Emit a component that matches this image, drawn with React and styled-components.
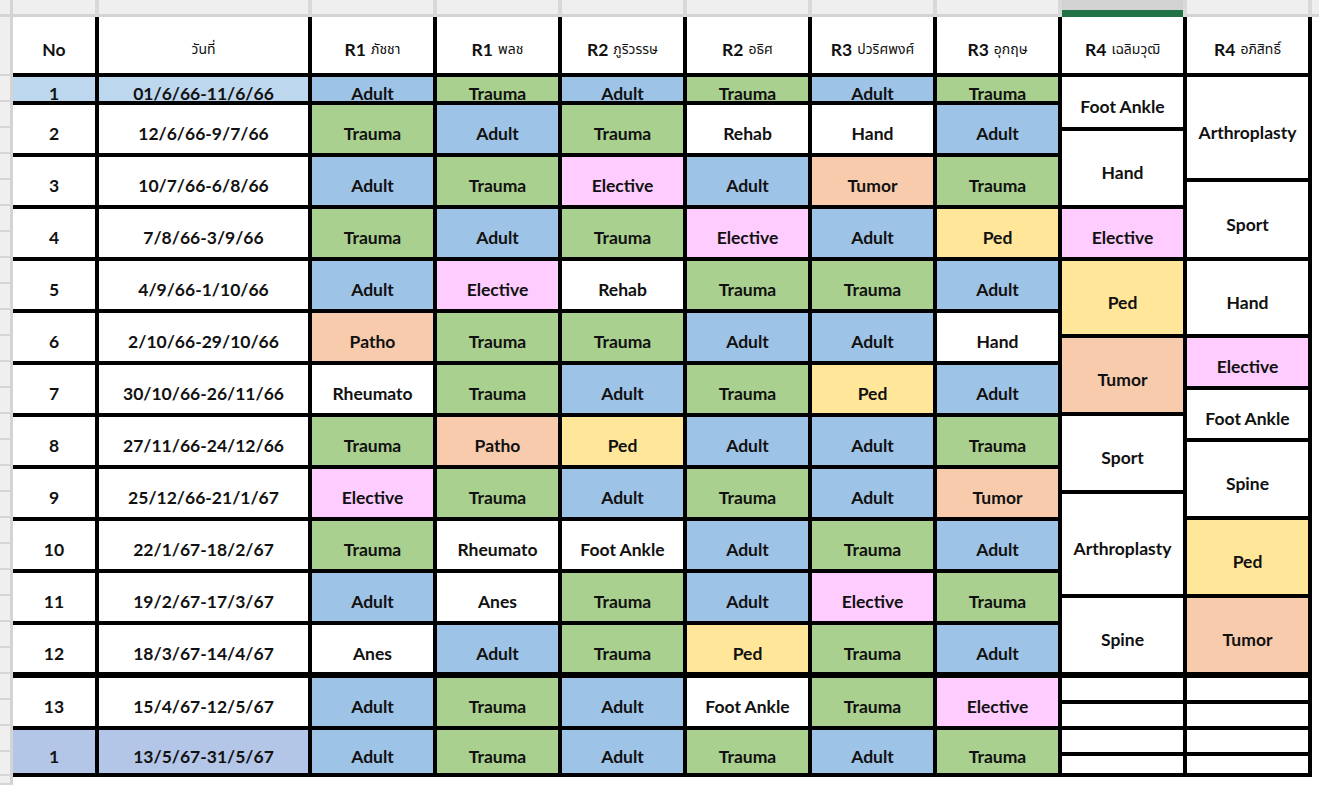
import React from 'react';
import styled, { createGlobalStyle } from 'styled-components';

const GlobalStyle = createGlobalStyle`
  html, body {
    margin: 0;
    padding: 0;
    background: #ffffff;
  }
  body {
    font-family: Lato, "Noto Sans", "Noto Sans Thai", sans-serif;
  }
`;

const COLS = '82px 209px repeat(8, 121px)';

const COLORS = {
    Adult: '#9dc3e6',
    Trauma: '#a9d08e',
    Elective: '#ffccff',
    Tumor: '#f8cbad',
    Patho: '#f8cbad',
    Ped: '#ffe699',
};

const Sheet = styled.div`
    display: grid;
    grid-template-columns: 13px 1fr;
    grid-template-rows: 17px 1fr;
    width: 1319px;
    height: 785px;
    overflow: hidden;
    background: #ffffff;
`;

const Corner = styled.div`
    background: #efefef;
    border-right: 3px solid #d4d4d4;
    border-bottom: 3px solid #d4d4d4;
    box-sizing: border-box;
`;

const ColStrip = styled.div`
    display: grid;
    grid-template-columns: ${COLS} 1fr;
    column-gap: 4px;
    background: #d9d9d9;
`;

const ColHead = styled.div`
    background: ${props => props.$selected ? '#d2d2d2' : '#efefef'};
    border-bottom: ${props => props.$selected ? '7px solid #217346' : '3px solid #d4d4d4'};
    box-sizing: border-box;
`;

const RowStrip = styled.div`
    display: flex;
    flex-direction: column;
    background: #efefef;
    border-right: 3px solid #d4d4d4;
`;

const RowHead = styled.div`
    flex: ${props => props.$h ? 'none' : '1'};
    height: ${props => props.$h ? props.$h + 'px' : 'auto'};
    border-bottom: 2px solid #d6d6d6;
    box-sizing: border-box;
`;

const Table = styled.div`
    display: grid;
    grid-template-columns: ${COLS};
    grid-template-rows: 56px 24px repeat(10, 48px) 47px 50px 43px;
    column-gap: 4px;
    row-gap: 4px;
    padding: 0 4px 4px 0;
    background: #000000;
    align-self: start;
    justify-self: start;
`;

const Cell = styled.div`
    display: flex;
    align-items: center;
    justify-content: center;
    padding-top: 10px;
    box-sizing: border-box;
    overflow: hidden;
    background: ${props => props.$bg || '#ffffff'};
    margin-top: ${props => props.$thick ? '2px' : '0'};
    color: #111111;
    font-family: Lato, "Noto Sans", sans-serif;
    font-weight: 700;
    font-size: 17.5px;
    line-height: 20px;
    white-space: nowrap;
`;

const Thai = styled.span`
    font-family: "Noto Sans Thai", "Loma", "Garuda", "Noto Sans", "DejaVu Sans", sans-serif;
    font-weight: 400;
    font-size: 14px;
    margin-left: ${props => props.$gap ? '5px' : '0'};
`;

const Stack = styled.div`
    grid-column: ${props => props.$col};
    grid-row: ${props => props.$row};
    display: flex;
    flex-direction: column;
    gap: 4px;
    background: #000000;
    margin-top: ${props => props.$thick ? '2px' : '0'};
`;

const SubCell = styled(Cell)`
    flex: ${props => props.$h ? 'none' : '1'};
    height: ${props => props.$h ? props.$h + 'px' : 'auto'};
`;

const headers = [
    ['No', ''],
    ['', 'วันที่'],
    ['R1', 'ภัชชา'],
    ['R1', 'พลช'],
    ['R2', 'ภูริวรรษ'],
    ['R2', 'อธิศ'],
    ['R3', 'ปวริศพงศ์'],
    ['R3', 'อุกฤษ'],
    ['R4', 'เฉลิมวุฒิ'],
    ['R4', 'อภิสิทธิ์'],
];

const rows = [
    { no: '1', date: '01/6/66-11/6/66', bg: '#bdd7ee', cells: ['Adult', 'Trauma', 'Adult', 'Trauma', 'Adult', 'Trauma'] },
    { no: '2', date: '12/6/66-9/7/66', cells: ['Trauma', 'Adult', 'Trauma', 'Rehab', 'Hand', 'Adult'] },
    { no: '3', date: '10/7/66-6/8/66', cells: ['Adult', 'Trauma', 'Elective', 'Adult', 'Tumor', 'Trauma'] },
    { no: '4', date: '7/8/66-3/9/66', cells: ['Trauma', 'Adult', 'Trauma', 'Elective', 'Adult', 'Ped'] },
    { no: '5', date: '4/9/66-1/10/66', cells: ['Adult', 'Elective', 'Rehab', 'Trauma', 'Trauma', 'Adult'] },
    { no: '6', date: '2/10/66-29/10/66', cells: ['Patho', 'Trauma', 'Trauma', 'Adult', 'Adult', 'Hand'] },
    { no: '7', date: '30/10/66-26/11/66', cells: ['Rheumato', 'Trauma', 'Adult', 'Trauma', 'Ped', 'Adult'] },
    { no: '8', date: '27/11/66-24/12/66', cells: ['Trauma', 'Patho', 'Ped', 'Adult', 'Adult', 'Trauma'] },
    { no: '9', date: '25/12/66-21/1/67', cells: ['Elective', 'Trauma', 'Adult', 'Trauma', 'Adult', 'Tumor'] },
    { no: '10', date: '22/1/67-18/2/67', cells: ['Trauma', 'Rheumato', 'Foot Ankle', 'Adult', 'Trauma', 'Adult'] },
    { no: '11', date: '19/2/67-17/3/67', cells: ['Adult', 'Anes', 'Trauma', 'Adult', 'Elective', 'Trauma'] },
    { no: '12', date: '18/3/67-14/4/67', cells: ['Anes', 'Adult', 'Trauma', 'Ped', 'Trauma', 'Adult'] },
];

const tailRows = [
    { no: '13', date: '15/4/67-12/5/67', thick: true, subs: [22], cells: ['Adult', 'Trauma', 'Adult', 'Foot Ankle', 'Trauma', 'Elective'] },
    { no: '1', date: '13/5/67-31/5/67', bg: '#b4c6e7', subs: [22], cells: ['Adult', 'Trauma', 'Adult', 'Trauma', 'Adult', 'Trauma'] },
];

// merged blocks in the two R4 columns, heights in px
const r4a = [
    ['Foot Ankle', 50], ['Hand', 74], ['Elective', 48], ['Ped', 73],
    ['Tumor', 74], ['Sport', 74], ['Arthroplasty', 100], ['Spine', 0],
];
const r4b = [
    ['Arthroplasty', 101], ['Sport', 75], ['Hand', 73], ['Elective', 48],
    ['Foot Ankle', 48], ['Spine', 74], ['Ped', 74], ['Tumor', 0],
];

const rowHeads = [59, ...Array(23).fill(26), 26, 26, 26, 24, 0];

const RowCells = ({ row, thick }) => (
    <>
        <Cell $bg={row.bg} $thick={thick}>{row.no}</Cell>
        <Cell $bg={row.bg} $thick={thick}>{row.date}</Cell>
        {row.cells.map((c, i) => (
            <Cell key={i} $bg={COLORS[c]} $thick={thick}>{c}</Cell>
        ))}
    </>
);

const R4Column = ({ items, col }) => (
    <Stack $col={col} $row="2 / 14">
        {items.map(([label, h], i) => (
            <SubCell key={i} $h={h} $bg={COLORS[label]}>{label}</SubCell>
        ))}
    </Stack>
);

export default function App() {
    return (
        <>
            <GlobalStyle />
            <Sheet>
                <Corner />
                <ColStrip>
                    {Array.from({ length: 11 }).map((_, i) => (
                        <ColHead key={i} $selected={i === 8} />
                    ))}
                </ColStrip>
                <RowStrip>
                    {rowHeads.map((h, i) => <RowHead key={i} $h={h} />)}
                </RowStrip>
                <Table>
                    {headers.map(([bold, thai], i) => (
                        <Cell key={i}>
                            {bold}
                            {thai && <Thai $gap={!!bold}>{thai}</Thai>}
                        </Cell>
                    ))}
                    {rows.map((row, i) => <RowCells key={i} row={row} />)}
                    <R4Column items={r4a} col={9} />
                    <R4Column items={r4b} col={10} />
                    {tailRows.map((row, i) => (
                        <React.Fragment key={i}>
                            <RowCells row={row} thick={row.thick} />
                            {[9, 10].map(col => (
                                <Stack key={col} $col={col} $row={14 + i} $thick={row.thick}>
                                    <SubCell $h={row.subs[0]} />
                                    <SubCell />
                                </Stack>
                            ))}
                        </React.Fragment>
                    ))}
                </Table>
            </Sheet>
        </>
    );
}
